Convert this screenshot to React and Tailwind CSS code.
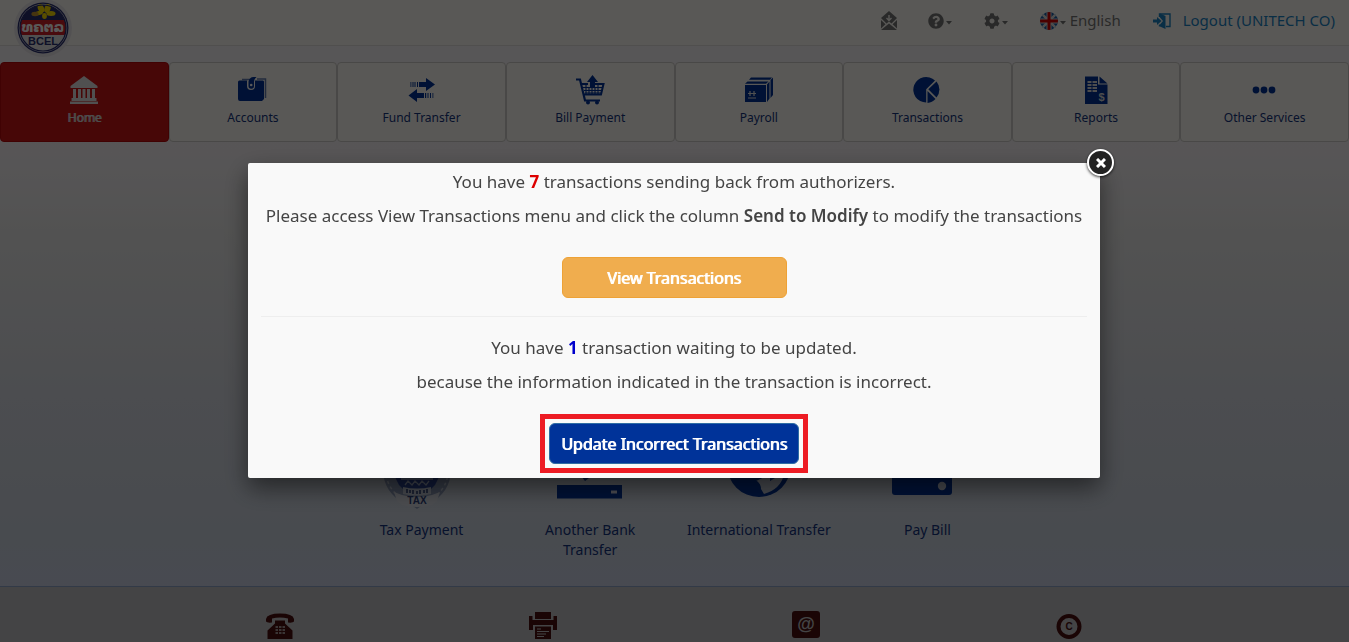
import React from "react";
import { FaQuestionCircle, FaCog } from "react-icons/fa";

const navy = "#003399";

function Logo() {
  return (
    <svg viewBox="0 0 58 58" className="size-[58px]" role="img" aria-label="BCEL">
      <defs>
        <clipPath id="disc"><circle cx="29" cy="29" r="23" /></clipPath>
      </defs>
      <circle cx="29" cy="29" r="29" fill="#ece8ec" />
      <circle cx="29" cy="29" r="25.500" fill="#2a3070" />
      <circle cx="29" cy="29" r="24.200" fill="#d8d8e2" />
      <g clipPath="url(#disc)">
        <rect width="58" height="58" fill="#e4e4e4" />
        <rect width="58" height="22" fill="#2a3070" />
        <rect y="21" width="58" height="15" fill="#d02028" />
      </g>
      <g fill="#ffe000">
        <ellipse cx="27" cy="9.500" rx="3" ry="4.500" transform="rotate(-25 27 9.500)" />
        <ellipse cx="33.500" cy="9.500" rx="3" ry="4.500" transform="rotate(20 33.500 9.500)" />
        <ellipse cx="37" cy="14.500" rx="4.500" ry="2.500" />
        <ellipse cx="30.500" cy="17" rx="2.400" ry="3" />
        <ellipse cx="25" cy="14" rx="4" ry="2" transform="rotate(-12 25 14)" />
      </g>
      <ellipse cx="21" cy="15" rx="3.600" ry="2.200" fill="#c89430" />
      <circle cx="29" cy="29" r="23" fill="none" stroke="#2a3070" strokeWidth="1.200" />
      <text x="29" y="33" textAnchor="middle" fontSize="14" fontWeight="700" fill="#fff" fontFamily="DejaVu Sans, sans-serif">ທຄຕລ</text>
      <text x="29" y="46" textAnchor="middle" fontSize="11" fontWeight="700" fill="#2a3070" fontFamily="Liberation Sans, sans-serif">BCEL</text>
    </svg>
  );
}

function BankIcon() {
  return (
    <svg viewBox="0 0 28 28" className="size-7" fill="#e4e4e4">
      <path d="M14 0 27.500 10v2H.5v-2zM3 13h3v9H3zM8 13h3v9H8zM12.500 13h3v9h-3zM17 13h3v9h-3zM22 13h3v9h-3zM1.500 22h25v3h-25zM0 25.500h28V28H0z" />
    </svg>
  );
}
function WalletIcon() {
  return (
    <svg viewBox="0 0 29 28" className="h-7 w-[29px]">
      <path d="M4 3.500H12M19 3h8.500v19" fill="none" stroke="#667cae" strokeWidth="1.500" />
      <path d="M1.500 4.500H9V10a4 4 0 0 0 8 0V4.500h8A1.500 1.500 0 0 1 26 6v17l-2 2H2a2 2 0 0 1-2-2V6a1.500 1.500 0 0 1 1.500-1.500z" fill={navy} />
      <path d="M10.500 5.500q1-4.500 5-4.500h3q-2.500 2-2.500 4.500V10a2.700 2.700 0 0 1-5.500 0z" fill={navy} />
      <circle cx="13.200" cy="9" r="1.300" fill="#fff" />
    </svg>
  );
}
function TransferIcon() {
  return (
    <svg viewBox="0 0 28 28" className="size-7" fill={navy}>
      <path d="M11 6h7V2l9 6.500-9 6.500v-4h-7zM9 6h1v5H9zM6.500 6h1v5h-1zM4.500 6h1v5h-1zM2.500 6h.8v5h-.8z" />
      <path d="M16 17H9v-4l-8.500 6.500L9 26v-4h7zM17 17h1.200v5H17zM19.500 17h1v5h-1zM22 17h1v5h-1zM24.500 17h.8v5h-.8z" />
    </svg>
  );
}
function CartIcon() {
  return (
    <svg viewBox="0 0 30 30" className="size-[30px]" fill="none" stroke={navy}>
      <path d="M1 4.500h4l5 21h15" strokeWidth="2.200" />
      <path d="M6 9h7M20 9h8.500l-2.500 10.500H9" strokeWidth="2" />
      <path d="M8 12.500h19M9 15.500h18M10 18h16M11 10v10M14 12v8M17 12v8M20 12v8M23 10v10" strokeWidth="1.100" />
      <path d="M17.500 0 23 7h-3v6h-5V7h-3z" fill={navy} stroke="none" />
      <circle cx="13" cy="27.500" r="2" fill={navy} stroke="none" /><circle cx="22" cy="27.500" r="2" fill={navy} stroke="none" />
    </svg>
  );
}
function BoxIcon() {
  return (
    <svg viewBox="0 0 28 28" className="size-7" fill={navy}>
      <path d="M0 9h21v17H0zM2.500 5.500h21L21 7.700H0zM6 1.500h21l-2 2.300H4zM22 8.500l2.500-3v17L22 26zM25.500 4 28 1.500V19l-2.500 3z" />
      <path d="M5 15v5M9 15v5M3 17.500h8M3 22h8" stroke="#e4e4e4" strokeWidth="1.200" />
    </svg>
  );
}
function PieIcon() {
  return (
    <svg viewBox="0 0 28 28" className="size-7" fill={navy}>
      <path d="M13.200 26.500A12.800 12.800 0 1 1 22 4.500L13.200 13.300z" />
      <path d="M23.500 5.500a12.500 12.500 0 0 1 0 16L15.300 13.300z" />
      <path d="M14.500 15 22.500 23a12 12 0 0 1-8 4z" />
    </svg>
  );
}
function ReportIcon() {
  return (
    <svg viewBox="0 0 28 28" className="size-7">
      <path d="M3 .5h13v8h9.500V28H3zM17.500.5 25.500 7.500h-8z" fill={navy} />
      <path d="M5.500 6h9.500M5.500 9h9.500M5.500 12h9.500M5.500 15h9.500" stroke="#ddd" strokeWidth="1.800" />
      <path d="M10 4v12" stroke={navy} />
      <text x="19.500" y="25" textAnchor="middle" fontSize="11" fontWeight="700" fill="#ddd" fontFamily="Liberation Sans, sans-serif">$</text>
    </svg>
  );
}
function DotsIcon() {
  return (
    <svg viewBox="0 0 28 28" className="size-7" fill={navy}>
      <circle cx="5" cy="14" r="3.400" /><circle cx="13" cy="14" r="3.400" /><circle cx="21" cy="14" r="3.400" />
    </svg>
  );
}
function MailIcon() {
  return (
    <svg viewBox="0 0 18 20" className="h-5 w-[18px]" fill="#777">
      <path d="M9 0 17 7 11.500 12.500 9 10.500 6.500 12.500 1 7z" />
      <path d="M1 9l4.500 4.200L1 17.500zM17 9v8.500l-4.500-4.300zM9 12.500l8 6.500H1z" />
      <path d="M9 4v5M6.500 7 9 9.500 11.500 7" stroke="#fffdf6" strokeWidth="1.400" fill="none" />
    </svg>
  );
}
function Caret() {
  return <svg viewBox="0 0 6 4" className="mt-1 h-1 w-1.5" fill="#777"><path d="M0 0h6L3 3.500z" /></svg>;
}
function FlagIcon() {
  return (
    <svg viewBox="0 0 18 18" className="size-[18px]">
      <defs><clipPath id="flag"><circle cx="9" cy="9" r="9" /></clipPath></defs>
      <g clipPath="url(#flag)">
        <rect width="18" height="18" fill="#1a5fa8" />
        <path d="M0 0l18 18M18 0L0 18" stroke="#ddd" strokeWidth="2.500" />
        <path d="M9 0v18M0 9h18" stroke="#ddd" strokeWidth="5" />
        <path d="M9 0v18M0 9h18" stroke="#d80000" strokeWidth="3" />
      </g>
    </svg>
  );
}
function LogoutIcon() {
  return (
    <svg viewBox="0 0 18 16" className="h-4 w-[18px]">
      <path d="M0 6.500h4V4l4.500 4L4 12V9.500H0z" fill="#1c84c6" />
      <path d="M6.500 4V1H17v12.500h-4M6.500 11.500v2" fill="none" stroke="#1c84c6" strokeWidth="1.400" />
      <path d="M7 .5 12.500 3v13L7 13.500v-2L10 8 7 4.500z" fill="#1c84c6" />
    </svg>
  );
}

function TaxIcon() {
  return (
    <svg viewBox="0 0 78 76" className="h-[76px] w-[78px]">
      <path d="M34 0C54 0 68 14 68 34c0 17-9 28-20 33q-8 2-14 7-6-5-14-7C9 62 0 51 0 34 0 14 14 0 34 0z" fill="#8e9cba" />
      <circle cx="34" cy="36" r="31" fill="none" stroke="#c6cddb" strokeWidth="1.500" strokeDasharray="3 3" />
      <path d="M11 40h46l-5 10-4 4H20l-4-4z" fill="#2d469a" />
      <path d="M18 44h32M22 50l3-4 4 4 3-4 4 4 3-4 4 4 3-4" stroke="#aab6d0" strokeWidth="1.300" fill="none" />
      <path d="M20 52q14 3 28 0v7q-14 3-28 0z" fill="#c9d0de" />
      <path d="M24 54v4M27 55v3M30 55v4M34 56v3M37 55v4M41 55v3M44 54v4" stroke="#2c3f78" strokeWidth="1.500" />
      <path d="M11 57l8 3q15 4 30 0l8-3-3 9-5 4q-15 4-30 0l-5-4z" fill="#d8dbe4" />
      <text x="34" y="69" textAnchor="middle" fontSize="10" fontWeight="700" fill="#2c3f78" fontFamily="Liberation Sans, sans-serif">TAX</text>
    </svg>
  );
}
function BankTransferIcon() {
  return (
    <svg viewBox="0 0 66 64" className="h-16 w-[66px]" fill={navy}>
      <path d="M20 36l4-3 8 10-4 3zM0 50h65v13.500H0z" />
      <path d="M54 55.500h6v3h-6z" fill="#dde" />
    </svg>
  );
}
function GlobeIcon() {
  return (
    <svg viewBox="0 0 64 64" className="size-16">
      <circle cx="32" cy="30" r="32" fill={navy} />
      <path d="M29 46q8-3 9-5l5-2 14 0q-3 15-20 20l-3-5q0-5-4-8z" fill="#c9d0de" />
      <path d="M43 36q6 0 5 7l-5 3z" fill={navy} />
    </svg>
  );
}
function PayBillIcon() {
  return (
    <svg viewBox="0 0 70 64" className="h-16 w-[70px]">
      <path d="M3 8h51a6 6 0 0 1 6 6v43a3 3 0 0 1-3 3H3a3 3 0 0 1-3-3V11a3 3 0 0 1 3-3z" fill={navy} />
      <circle cx="50" cy="51" r="4.200" fill="#c9d0de" />
    </svg>
  );
}

const tabs = [
  ["Home", BankIcon], ["Accounts", WalletIcon], ["Fund Transfer", TransferIcon], ["Bill Payment", CartIcon],
  ["Payroll", BoxIcon], ["Transactions", PieIcon], ["Reports", ReportIcon], ["Other Services", DotsIcon],
];

const services = [
  ["Tax Payment", TaxIcon], ["Another Bank Transfer", BankTransferIcon],
  ["International Transfer", GlobeIcon], ["Pay Bill", PayBillIcon],
];

function Footer() {
  return (
    <footer className="border-t border-[#8fa5cc] bg-[#c4c4c6] pt-6 pb-[3px]">
      <div className="mx-auto grid w-[78%] grid-cols-4 place-items-center">
        <a href="#phone" aria-label="Telephone">
          <svg viewBox="0 0 28 28" className="size-7" fill="#4a1010">
            <path d="M0 10.500V8q1-5.500 14-5.500T28 8v2.500q-1 1.500-6 1V7.500q-8-2-16 0v4q-5 .5-6-1z" />
            <path d="M9 9.500h10v3l7.500 7V28H1.500v-8.500l7.500-7z" />
            <path d="M9.500 16h9.500M9.500 19h9.500M9.500 22h9.500" stroke="#c4c4c6" strokeWidth="1.500" strokeDasharray="2.500 1" />
          </svg>
        </a>
        <a href="#fax" aria-label="Fax">
          <svg viewBox="0 0 28 28" className="size-7" fill="#4a1010">
            <path d="M6 1h16v7H6zM0 5h3.500v4h21V5H28v14h-4v-5H4v5H0zM6 15.500h16V28H6z" />
            <path d="M8 18h4M8 20.500h12M8 23h9M8 25.500h7" stroke="#c4c4c6" strokeWidth="1" />
          </svg>
        </a>
        <a href="#email" aria-label="Email">
          <svg viewBox="0 0 28 28" className="size-7">
            <rect width="28" height="27" rx="3" fill="#4a1010" />
            <text x="14" y="19" textAnchor="middle" fontSize="18" fontWeight="700" fill="#c4c4c6" fontFamily="Liberation Sans, sans-serif">@</text>
          </svg>
        </a>
        <a href="#copyright" aria-label="Copyright">
          <svg viewBox="0 0 28 28" className="size-7">
            <circle cx="14" cy="15.500" r="10.500" fill="none" stroke="#4a1010" strokeWidth="4" />
            <text x="14" y="19" textAnchor="middle" fontSize="10" fontWeight="700" fill="#4a1010" fontFamily="Liberation Sans, sans-serif">C</text>
          </svg>
        </a>
      </div>
    </footer>
  );
}

function Notice() {
  return (
    <div className="fixed inset-0 flex items-center justify-center bg-black/65 pr-px pb-px">
      <section role="dialog" aria-modal="true" aria-label="Pending transactions" className="relative w-full max-w-[852px] rounded-xs bg-[#f9f9f9] px-[13px] pt-0.5 pb-[5px] text-center text-[17px] leading-[34px] text-[#444] shadow-[0_10px_25px_rgba(0,0,0,0.5)]">
        <button aria-label="Close" className="absolute -top-3.5 -right-3.5 flex size-[27px] items-center justify-center rounded-full border-2 border-white bg-[#222] shadow-[0_1px_3px_rgba(0,0,0,0.8)]">
          <svg viewBox="0 0 10 10" className="size-2.5" stroke="#fff" strokeWidth="3"><path d="M1 1l8 8M9 1L1 9" /></svg>
        </button>
        <p>You have <b className="font-bold text-[#d00]">7</b> transactions sending back from authorizers.</p>
        <p>Please access View Transactions menu and click the column <b className="font-semibold">Send to Modify</b> to modify the transactions</p>
        <button className="mx-auto mt-6 block h-[41px] w-[225px] rounded-md border border-[#eea236] bg-[#f0ad4e] text-base text-white [text-shadow:1px_0_0_currentColor]">View Transactions</button>
        <hr className="mt-[18px] mb-3.5 border-[#eee]" />
        <p>You have <b className="font-bold text-[#00c]">1</b> transaction waiting to be updated.</p>
        <p>because the information indicated in the transaction is incorrect.</p>
        <div className="mx-auto mt-[15px] w-fit border-[5px] border-[#ed1c24] p-1">
          <button className="block h-[41px] w-[250px] rounded-md border border-[#2e6da4] bg-[#003399] text-base text-white [text-shadow:1px_0_0_currentColor]">Update Incorrect Transactions</button>
        </div>
      </section>
    </div>
  );
}

export default function App() {
  return (
    <div className="flex min-h-screen flex-col bg-[linear-gradient(#fbf6fa_0%,#f8f4f7_24%,#ececeb_36%,#d9dce4_62%,#ced6e2_84%,#cdd5ea_92%)] font-['Noto_Sans',sans-serif]">
      <header className="relative flex h-[46px] items-center justify-end border-b border-[#e4e2de] bg-[#fffdf6] pr-3.5 pb-1 text-[15px] text-[#777]">
        <a href="#home" className="absolute -top-px left-3.5"><Logo /></a>
        <div className="flex items-center">
          <button aria-label="Messages" className="mr-[30px]"><MailIcon /></button>
          <button aria-label="Help" className="mr-8 flex items-center gap-0.5"><FaQuestionCircle className="size-4" color="#777" /><Caret /></button>
          <button aria-label="Settings" className="mr-8 flex items-center gap-0.5"><FaCog className="size-4" color="#777" /><Caret /></button>
          <button className="mr-8 flex items-center gap-0.5"><FlagIcon /><Caret /><span className="ml-0.5">English</span></button>
          <a href="#logout" className="flex items-center gap-3 text-[#1c84c6]"><LogoutIcon />Logout (UNITECH CO)</a>
        </div>
      </header>
      <nav className="mt-4 grid grid-cols-8 text-xs">
        {tabs.map(([label, Icon], i) => (
          <a key={label} href={"#" + label} className={i === 0
            ? "flex h-20 flex-col items-center rounded-sm border border-[#b8080a] bg-[#cc1416] pt-3 text-[#ddd] [text-shadow:1px_0_0_currentColor]"
            : "flex h-20 flex-col items-center rounded-sm border border-[#d0ceca] bg-[#fffdf6] pt-3 text-[#14347f]"}>
            <span className="flex h-[30px] items-center"><Icon /></span>
            <span className="mt-[3px] leading-5">{label}</span>
          </a>
        ))}
      </nav>
      <main className="flex flex-1 flex-col justify-end pb-[26px]">
        <div className="grid grid-cols-8">
          {services.map(([label, Icon], i) => (
            <a key={label} href={"#" + label} className={(i === 0 ? "col-start-3 " : "") + "flex flex-col items-center px-3 text-center text-sm leading-5 text-[#14347f]"}>
              <span className="mb-[21px] flex h-16 items-start"><Icon /></span>
              <span>{label}</span>
            </a>
          ))}
        </div>
      </main>
      <Footer />
      <Notice />
    </div>
  );
}
